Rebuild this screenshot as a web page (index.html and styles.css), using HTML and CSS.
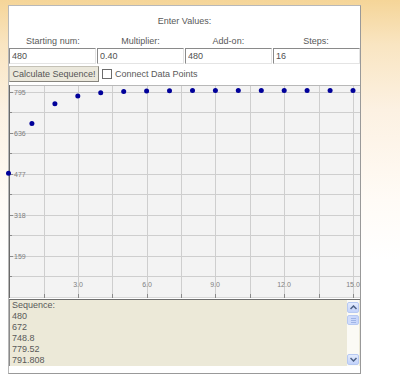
FILE: index.html
```html
<!DOCTYPE html>
<html lang="en">
<head>
    <meta charset="UTF-8">
    <title>Sequence Grapher</title>
    <link rel="stylesheet" href="styles.css">
</head>
<body>
    <div class="applet">
        <div class="title">Enter Values:</div>

        <!-- Field labels -->
        <div class="labels">
            <span>Starting num:</span>
            <span>Multiplier:</span>
            <span>Add-on:</span>
            <span>Steps:</span>
        </div>

        <!-- Inputs -->
        <div class="inputs">
            <input type="text" value="480">
            <input type="text" value="0.40">
            <input type="text" value="480">
            <input type="text" value="16">
        </div>

        <div class="controls">
            <button class="calc">Calculate Sequence!</button>
            <label class="check"><span class="box"></span>Connect Data Points</label>
        </div>

        <!-- Graph -->
        <div class="chart">
            <svg width="351" height="213" viewBox="0 0 351 213">
                <rect width="351" height="213" fill="#f3f3f3"/>
                <g stroke="#cecece" stroke-width="1">
                    <line x1="35.5" y1="0" x2="35.5" y2="213"/>
                    <line x1="69.5" y1="0" x2="69.5" y2="213"/>
                    <line x1="103.5" y1="0" x2="103.5" y2="213"/>
                    <line x1="138.5" y1="0" x2="138.5" y2="213"/>
                    <line x1="172.5" y1="0" x2="172.5" y2="213"/>
                    <line x1="206.5" y1="0" x2="206.5" y2="213"/>
                    <line x1="241.5" y1="0" x2="241.5" y2="213"/>
                    <line x1="275.5" y1="0" x2="275.5" y2="213"/>
                    <line x1="310.5" y1="0" x2="310.5" y2="213"/>
                    <line x1="344.5" y1="0" x2="344.5" y2="213"/>
                    <line x1="0" y1="7.5" x2="351" y2="7.5"/>
                    <line x1="0" y1="27.5" x2="351" y2="27.5"/>
                    <line x1="0" y1="48.5" x2="351" y2="48.5"/>
                    <line x1="0" y1="68.5" x2="351" y2="68.5"/>
                    <line x1="0" y1="89.5" x2="351" y2="89.5"/>
                    <line x1="0" y1="109.5" x2="351" y2="109.5"/>
                    <line x1="0" y1="130.5" x2="351" y2="130.5"/>
                    <line x1="0" y1="150.5" x2="351" y2="150.5"/>
                    <line x1="0" y1="171.5" x2="351" y2="171.5"/>
                    <line x1="0" y1="191.5" x2="351" y2="191.5"/>
                </g>
                <line x1="0" y1="0.5" x2="351" y2="0.5" stroke="#b8b8b8"/>
                <line x1="0" y1="212.5" x2="351" y2="212.5" stroke="#d8d8d8"/>

                <!-- axis ticks -->
                <g stroke="#8a8a8a" stroke-width="1">
                    <line x1="0" y1="7.5" x2="4" y2="7.5"/>
                    <line x1="0" y1="27.5" x2="3" y2="27.5"/>
                    <line x1="0" y1="48.5" x2="4" y2="48.5"/>
                    <line x1="0" y1="68.5" x2="3" y2="68.5"/>
                    <line x1="0" y1="89.5" x2="4" y2="89.5"/>
                    <line x1="0" y1="109.5" x2="3" y2="109.5"/>
                    <line x1="0" y1="130.5" x2="4" y2="130.5"/>
                    <line x1="0" y1="150.5" x2="3" y2="150.5"/>
                    <line x1="0" y1="171.5" x2="4" y2="171.5"/>
                    <line x1="0" y1="191.5" x2="3" y2="191.5"/>
                    <line x1="35.5" y1="209" x2="35.5" y2="213"/>
                    <line x1="69.5" y1="209" x2="69.5" y2="213"/>
                    <line x1="103.5" y1="209" x2="103.5" y2="213"/>
                    <line x1="138.5" y1="209" x2="138.5" y2="213"/>
                    <line x1="172.5" y1="209" x2="172.5" y2="213"/>
                    <line x1="206.5" y1="209" x2="206.5" y2="213"/>
                    <line x1="241.5" y1="209" x2="241.5" y2="213"/>
                    <line x1="275.5" y1="209" x2="275.5" y2="213"/>
                    <line x1="310.5" y1="209" x2="310.5" y2="213"/>
                    <line x1="344.5" y1="209" x2="344.5" y2="213"/>
                </g>
                <line x1="0.5" y1="0" x2="0.5" y2="213" stroke="#6a6a6a"/>

                <g class="axis-label">
                    <text x="5" y="10">795</text>
                    <text x="5" y="51">636</text>
                    <text x="5" y="92">477</text>
                    <text x="5" y="133">318</text>
                    <text x="5" y="174">159</text>
                </g>
                <g class="axis-label" text-anchor="middle">
                    <text x="69" y="202">3.0</text>
                    <text x="138" y="202">6.0</text>
                    <text x="206" y="202">9.0</text>
                    <text x="275" y="202">12.0</text>
                    <text x="344" y="202">15.0</text>
                </g>

                <g fill="#00009a">
                    <circle cx="-0.5" cy="88.2" r="2.5"/>
                    <circle cx="22.9" cy="38.6" r="2.5"/>
                    <circle cx="45.9" cy="18.8" r="2.5"/>
                    <circle cx="68.8" cy="10.9" r="2.5"/>
                    <circle cx="91.7" cy="7.7" r="2.5"/>
                    <circle cx="114.7" cy="6.4" r="2.5"/>
                    <circle cx="137.6" cy="5.9" r="2.5"/>
                    <circle cx="160.5" cy="5.7" r="2.5"/>
                    <circle cx="183.5" cy="5.6" r="2.5"/>
                    <circle cx="206.4" cy="5.6" r="2.5"/>
                    <circle cx="229.3" cy="5.6" r="2.5"/>
                    <circle cx="252.3" cy="5.6" r="2.5"/>
                    <circle cx="275.2" cy="5.6" r="2.5"/>
                    <circle cx="298.1" cy="5.6" r="2.5"/>
                    <circle cx="321.1" cy="5.6" r="2.5"/>
                    <circle cx="344" cy="5.6" r="2.5"/>
                </g>
            </svg>
        </div>

        <!-- Sequence output -->
        <div class="output">
            <div class="output-text">
                Sequence:<br>
                480<br>
                672<br>
                748.8<br>
                779.52<br>
                791.808
            </div>
            <div class="scrollbar">
                <div class="sb-btn">
                    <svg width="7" height="5" viewBox="0 0 7 5"><path d="M0.5 4 L3.5 1 L6.5 4" fill="none" stroke="#4d6185" stroke-width="1.5"/></svg>
                </div>
                <div class="sb-thumb">
                    <span></span><span></span><span></span>
                </div>
                <div class="sb-track"></div>
                <div class="sb-btn">
                    <svg width="7" height="5" viewBox="0 0 7 5"><path d="M0.5 1 L3.5 4 L6.5 1" fill="none" stroke="#4d6185" stroke-width="1.5"/></svg>
                </div>
            </div>
        </div>
    </div>
</body>
</html>
```

FILE: styles.css
```css
body {
    margin: 0;
    height: 383px;
    font-family: "Liberation Sans", Arial, sans-serif;
    font-size: 9px;
    color: #595959;
    background: linear-gradient(to bottom, #f5d598 0, #f9e5c2 45px, #fcf1e2 110px, #fffbf6 200px, #fff 260px);
}

.applet {
    margin: 5px 0 0 8px;
    width: 353px;
    height: 369px;
    box-sizing: border-box;
    background-color: #fff;
    border: 1px solid #b8b8b8;
    border-right-color: #999;
    border-bottom-color: #999;
}

.title {
    padding-top: 9px;
    line-height: 12px;
    text-align: center;
}

.labels {
    display: grid;
    grid-template-columns: repeat(4, 1fr);
    margin-top: 8px;
    line-height: 12px;
    text-align: center;
}

.inputs {
    display: grid;
    grid-template-columns: repeat(4, 87px);
    gap: 1px;
    margin-top: 1px;
}

.inputs input {
    width: 100%;
    height: 16px;
    margin: 0;
    padding: 0 2px;
    box-sizing: border-box;
    border: 1px solid;
    border-color: #8a8a8a #e4e4e4 #e4e4e4 #8a8a8a;
    font-family: "Liberation Sans", Arial, sans-serif;
    font-size: 9px;
    color: #505050;
    background-color: #fff;
    outline: none;
}

.controls {
    display: flex;
    align-items: center;
    height: 16px;
    margin-top: 2px;
}

.calc {
    width: 90px;
    height: 16px;
    padding: 0;
    border: 1px solid;
    border-color: #c4c1b6 #86847d #86847d #c4c1b6;
    background-color: #ebe8dc;
    font-family: "Liberation Sans", Arial, sans-serif;
    font-size: 9px;
    color: #555;
}

.check {
    display: flex;
    align-items: center;
    gap: 3px;
    margin-left: 3px;
}

.check .box {
    width: 10px;
    height: 10px;
    box-sizing: border-box;
    border: 1px solid #6c6c6c;
    background-color: #fff;
}

.chart {
    height: 213px;
    margin-top: 3px;
}

.chart svg {
    display: block;
    overflow: visible;
}

.axis-label text {
    font-family: "Liberation Sans", Arial, sans-serif;
    font-size: 7px;
    fill: #808080;
}

.output {
    display: flex;
    height: 67px;
    margin-top: 1px;
    box-sizing: border-box;
    background-color: #ece9d8;
    border-top: 1px solid #6e6e6e;
    border-left: 1px solid #8a8a8a;
}

.output-text {
    flex: 1;
    padding-left: 2px;
    line-height: 11px;
    overflow: hidden;
}

.scrollbar {
    display: flex;
    flex-direction: column;
    width: 12px;
    margin-right: 1px;
    padding: 2px 0 1px;
    background-color: #fbfaf5;
}

.sb-btn {
    display: flex;
    align-items: center;
    justify-content: center;
    height: 11px;
    box-sizing: border-box;
    border: 1px solid #b7c9f2;
    border-radius: 2px;
    background: linear-gradient(to bottom, #e3ebfd, #c3d3fb);
}

.sb-thumb {
    display: flex;
    flex-direction: column;
    align-items: center;
    justify-content: center;
    gap: 1px;
    height: 10px;
    margin-top: 2px;
    box-sizing: border-box;
    border: 1px solid #b7c9f2;
    border-radius: 2px;
    background: linear-gradient(to right, #d3defc, #c6d5fb);
}

.sb-thumb span {
    display: block;
    width: 5px;
    height: 1px;
    background-color: #9fb4e6;
}

.sb-track {
    flex: 1;
}
```
